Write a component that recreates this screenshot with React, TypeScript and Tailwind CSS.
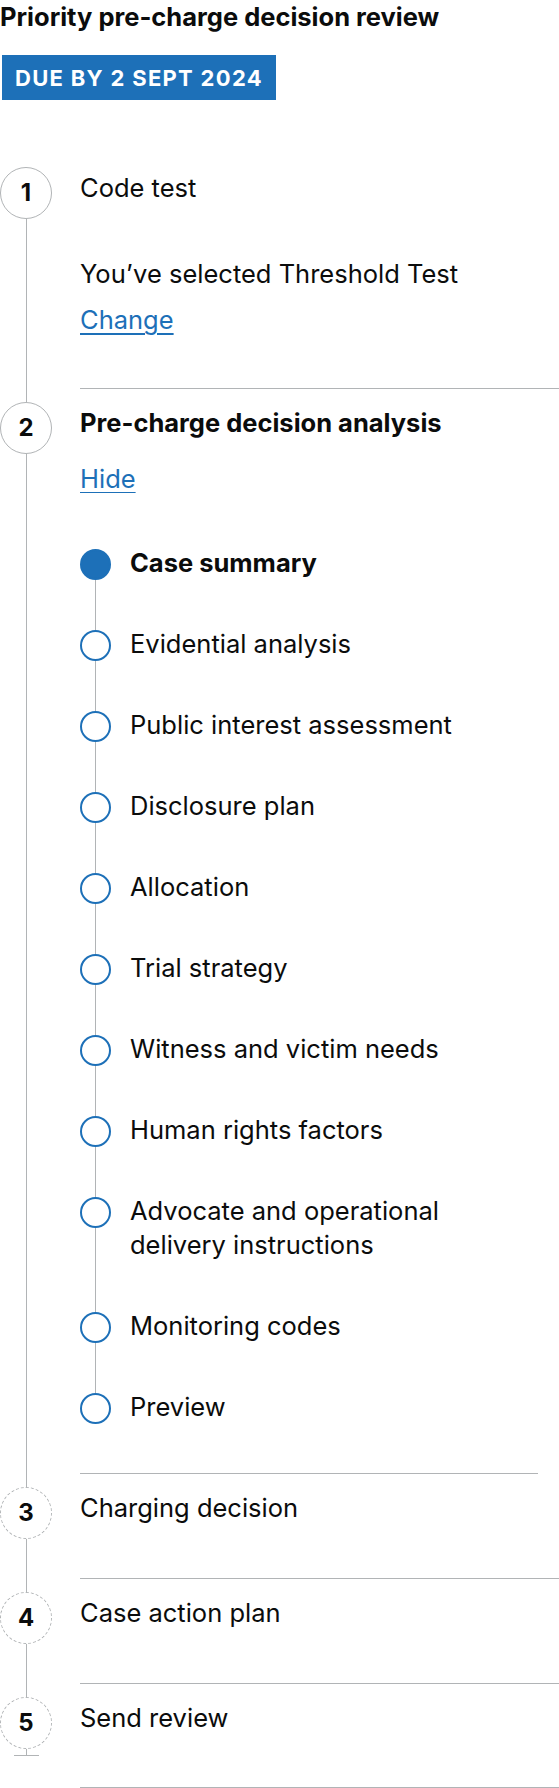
import React from "react";
import clsx from "clsx";

const substeps: { label: React.ReactNode; current?: boolean }[] = [
    { label: "Case summary", current: true },
    { label: "Evidential analysis" },
    { label: "Public interest assessment" },
    { label: "Disclosure plan" },
    { label: "Allocation" },
    { label: "Trial strategy" },
    { label: "Witness and victim needs" },
    { label: "Human rights factors" },
    {
        label: (
            <>
                Advocate and operational
                <br />
                delivery instructions
            </>
        ),
    },
    { label: "Monitoring codes" },
    { label: "Preview" },
];

type StepProps = {
    n: number;
    dashed?: boolean;
    first?: boolean;
    last?: boolean;
    divider?: string;
    children: React.ReactNode;
};

function Step({ n, dashed, first, last, divider, children }: StepProps) {
    return (
        <div className="flex">
            <div className="flex w-[52px] shrink-0 flex-col items-center">
                {!first && <div className="h-[14px] w-px bg-[#b1b4b6]" />}
                <div
                    className={clsx(
                        "flex h-[52px] w-[52px] shrink-0 items-center justify-center rounded-full border border-[#b1b4b6] bg-white text-[24px] font-bold leading-none",
                        dashed && "border-dashed"
                    )}
                >
                    {n}
                </div>
                {last ? (
                    <>
                        <div className="h-[6px] w-px bg-[#b1b4b6]" />
                        <div className="h-px w-[25px] bg-[#b1b4b6]" />
                    </>
                ) : (
                    <div className="w-px grow bg-[#b1b4b6]" />
                )}
            </div>
            <div className="ml-[28px] min-w-0 flex-1">
                {divider && <div className={clsx("h-px bg-[#b1b4b6]", divider)} />}
                <div className={first ? "pt-[4px]" : "pt-[17px]"}>{children}</div>
            </div>
        </div>
    );
}

function SubStep({
    label,
    current,
    first,
    last,
}: {
    label: React.ReactNode;
    current?: boolean;
    first?: boolean;
    last?: boolean;
}) {
    return (
        <div className="flex">
            <div className="flex w-[31px] shrink-0 flex-col items-center">
                <div className={clsx("h-[3px] w-px", !first && "bg-[#b1b4b6]")} />
                <div
                    className={clsx(
                        "h-[31px] w-[31px] shrink-0 rounded-full border-2 border-[#1d70b8]",
                        current ? "bg-[#1d70b8]" : "bg-white"
                    )}
                />
                {!last && <div className="w-px grow bg-[#b1b4b6]" />}
            </div>
            <div className={clsx("ml-[19px]", last ? "pb-[49px]" : "pb-[47px]", current && "font-bold")}>
                {label}
            </div>
        </div>
    );
}

export default function App() {
    return (
        <div className="min-h-[1788px] bg-white font-['Inter',sans-serif] text-[25.5px] leading-[34px] text-[#0b0c0c]">
            <h1 className="text-[25.5px] font-bold leading-[34px]">Priority pre-charge decision review</h1>
            <div className="ml-[2px] mt-[21px] inline-flex h-[45px] items-center bg-[#1d70b8] px-[13px] text-[22px] font-bold uppercase tracking-[1.3px] text-white">
                Due by 2 Sept 2024
            </div>

            <div className="mt-[67px]">
                <Step n={1} first>
                    <p>Code test</p>
                    <p className="mt-[52px]">You’ve selected Threshold Test</p>
                    <p className="mt-[12px] pb-[51px]">
                        <a href="#" className="text-[#1d70b8] underline decoration-[1.5px] underline-offset-[4px]">
                            Change
                        </a>
                    </p>
                </Step>

                <Step n={2} divider="mr-0">
                    <div className="pr-[21px]">
                        <p className="font-bold">Pre-charge decision analysis</p>
                        <p className="mt-[22px]">
                            <a href="#" className="text-[#1d70b8] underline decoration-[1px] underline-offset-[4px]">
                                Hide
                            </a>
                        </p>
                        <div className="mt-[50px]">
                            {substeps.map((s, i) => (
                                <SubStep
                                    key={i}
                                    label={s.label}
                                    current={s.current}
                                    first={i === 0}
                                    last={i === substeps.length - 1}
                                />
                            ))}
                        </div>
                    </div>
                </Step>

                <Step n={3} dashed divider="mr-[21px]">
                    <p className="pb-[53px]">Charging decision</p>
                </Step>

                <Step n={4} dashed divider="mr-0">
                    <p className="pb-[53px]">Case action plan</p>
                </Step>

                <Step n={5} dashed last divider="mr-0">
                    <p className="pb-[52px]">Send review</p>
                    <div className="h-px bg-[#b1b4b6]" />
                </Step>
            </div>
        </div>
    );
}
